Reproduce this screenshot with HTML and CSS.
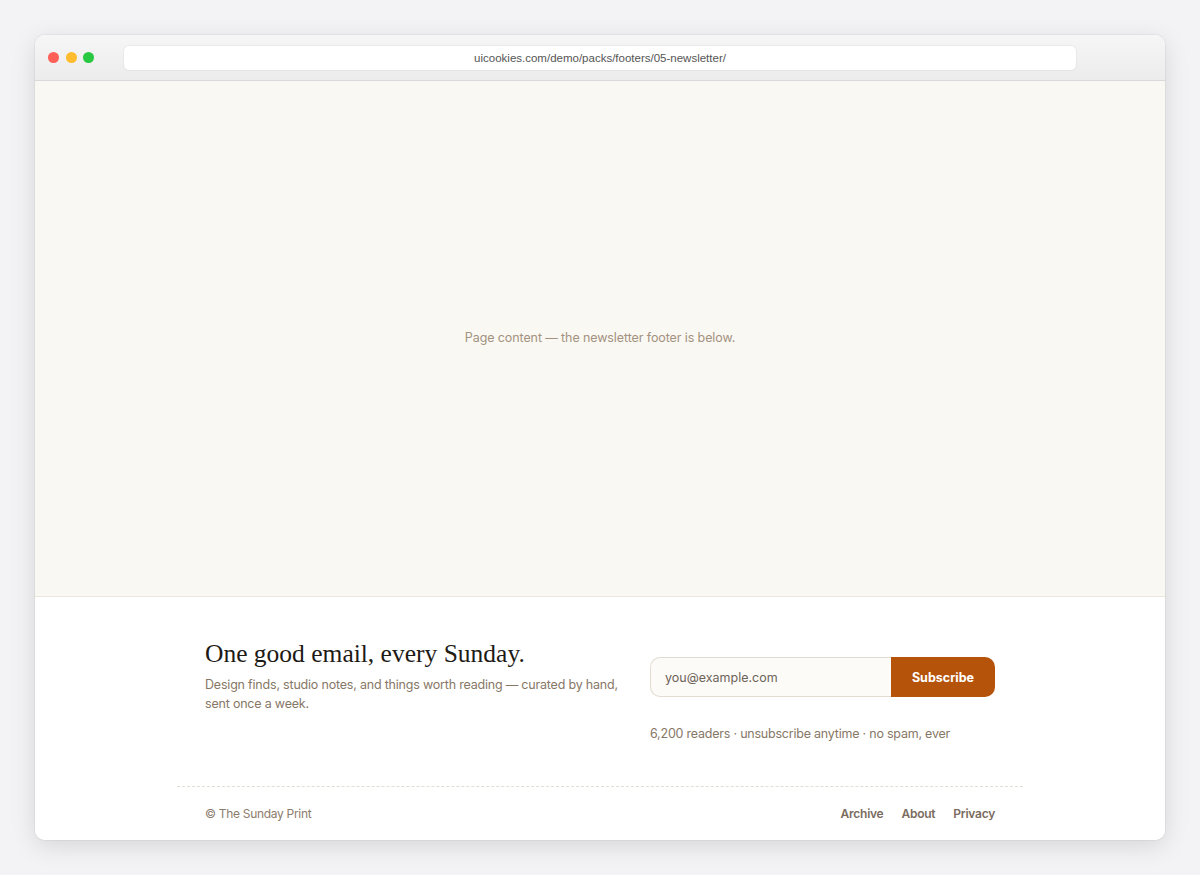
FILE: index.html
```html
<!DOCTYPE html>
<html>
<head>
    <link rel="stylesheet" href="styles.css">
</head>
<body>
    <!-- browser window frame -->
    <div class="window">
        <div class="titlebar">
            <div class="dots">
                <span class="dot red"></span>
                <span class="dot yellow"></span>
                <span class="dot green"></span>
            </div>
            <div class="address">uicookies.com/demo/packs/footers/05-newsletter/</div>
        </div>

        <!-- placeholder body of the page -->
        <main class="page">
            <p>Page content — the newsletter footer is below.</p>
        </main>

        <!-- newsletter footer -->
        <footer class="footer">
            <div class="footer-inner">
                <div class="signup">
                    <div class="pitch">
                        <h2>One good email, every Sunday.</h2>
                        <p>Design finds, studio notes, and things worth reading — curated by hand, sent once a week.</p>
                    </div>
                    <div class="join">
                        <form class="join-form" onsubmit="return false">
                            <input type="email" class="join-input" placeholder="you@example.com">
                            <button type="submit" class="join-button">Subscribe</button>
                        </form>
                        <p class="join-note">6,200 readers · unsubscribe anytime · no spam, ever</p>
                    </div>
                </div>
                <div class="footer-bottom">
                    <span class="copy">© The Sunday Print</span>
                    <nav class="footer-links">
                        <a href="#">Archive</a>
                        <a href="#">About</a>
                        <a href="#">Privacy</a>
                    </nav>
                </div>
            </div>
        </footer>
    </div>
</body>
</html>
```

FILE: styles.css
```css
/* outer backdrop */
body {
    margin: 0;
    padding: 35px;
    background-color: #f3f3f5;
    font-family: Inter, "Noto Sans", sans-serif;
}

/* the window itself */
.window {
    height: 805px;
    display: flex;
    flex-direction: column;
    background-color: #fff;
    border-radius: 10px;
    overflow: hidden;
    box-shadow: 0 6px 24px rgba(0, 0, 0, 0.12), 0 0 0 1px rgba(0, 0, 0, 0.04);
}

.titlebar {
    height: 45px;
    display: flex;
    align-items: center;
    padding: 0 89px 0 13px;
    background: linear-gradient(#f6f6f6, #ececec);
    border-bottom: 1px solid #d9d9d9;
}

.dots {
    display: flex;
    gap: 6.5px;
    width: 76px;
}

.dot {
    width: 11px;
    height: 11px;
    border-radius: 50%;
}

.red { background-color: #fe5f57; }
.yellow { background-color: #febc2e; }
.green { background-color: #28c840; }

.address {
    flex: 1;
    height: 24px;
    margin-top: 1px;
    line-height: 24px;
    background-color: #fff;
    border-radius: 5px;
    text-align: center;
    font-size: 11.5px;
    color: #555;
    font-family: "Liberation Sans", Arial, sans-serif;
    box-shadow: 0 0 0 1px rgba(0, 0, 0, 0.04);
}

/* page placeholder */
.page {
    flex: 1;
    display: flex;
    align-items: center;
    justify-content: center;
    background-color: #faf8f3;
    border-bottom: 1px solid #ebe6dd;
}

.page p {
    margin: 0 0 2px;
    font-size: 12.5px;
    letter-spacing: -0.1px;
    color: #a39280;
}

/* footer */
.footer {
    background-color: #fff;
}

.footer-inner {
    width: 846px;
    margin: 0 auto;
    padding-top: 41px;
}

.signup {
    display: grid;
    grid-template-columns: 1fr 345px;
    gap: 20px;
    padding: 0 28px 45px;
}

.pitch h2 {
    margin: 0;
    font-family: "Liberation Serif", Georgia, serif;
    font-weight: normal;
    font-size: 25.5px;
    line-height: 32px;
    color: #1e1a16;
}

.pitch p {
    margin: 5px 0 0;
    font-size: 12.5px;
    letter-spacing: -0.2px;
    line-height: 19px;
    color: #877766;
}

.join-form {
    display: flex;
    height: 40px;
    margin-top: 19px;
}

.join-input {
    flex: 1;
    min-width: 0;
    padding: 0 14px;
    font-family: inherit;
    font-size: 12.5px;
    color: #333;
    background-color: #fcfbf8;
    border: 1px solid #e2dbd1;
    border-right: none;
    border-radius: 10px 0 0 10px;
    outline: none;
}

.join-input::placeholder {
    color: #6e6358;
}

.join-button {
    width: 104px;
    font-family: inherit;
    font-size: 12.5px;
    font-weight: 700;
    color: #fff;
    background-color: #b5530b;
    border: none;
    border-radius: 0 10px 10px 0;
    cursor: pointer;
}

.join-note {
    margin: 29px 0 0;
    font-size: 12.5px;
    letter-spacing: -0.22px;
    color: #877766;
}

.footer-bottom {
    display: flex;
    justify-content: space-between;
    align-items: center;
    padding: 19px 28px 19px;
    border-top: 1px dashed #e2ddd5;
    font-size: 12px;
    color: #8c7c6b;
}

.copy {
    letter-spacing: -0.3px;
}

.footer-links {
    display: flex;
    gap: 18px;
}

.footer-links a {
    color: #7a6c5e;
    font-weight: 600;
    letter-spacing: -0.25px;
    text-decoration: none;
}
```
